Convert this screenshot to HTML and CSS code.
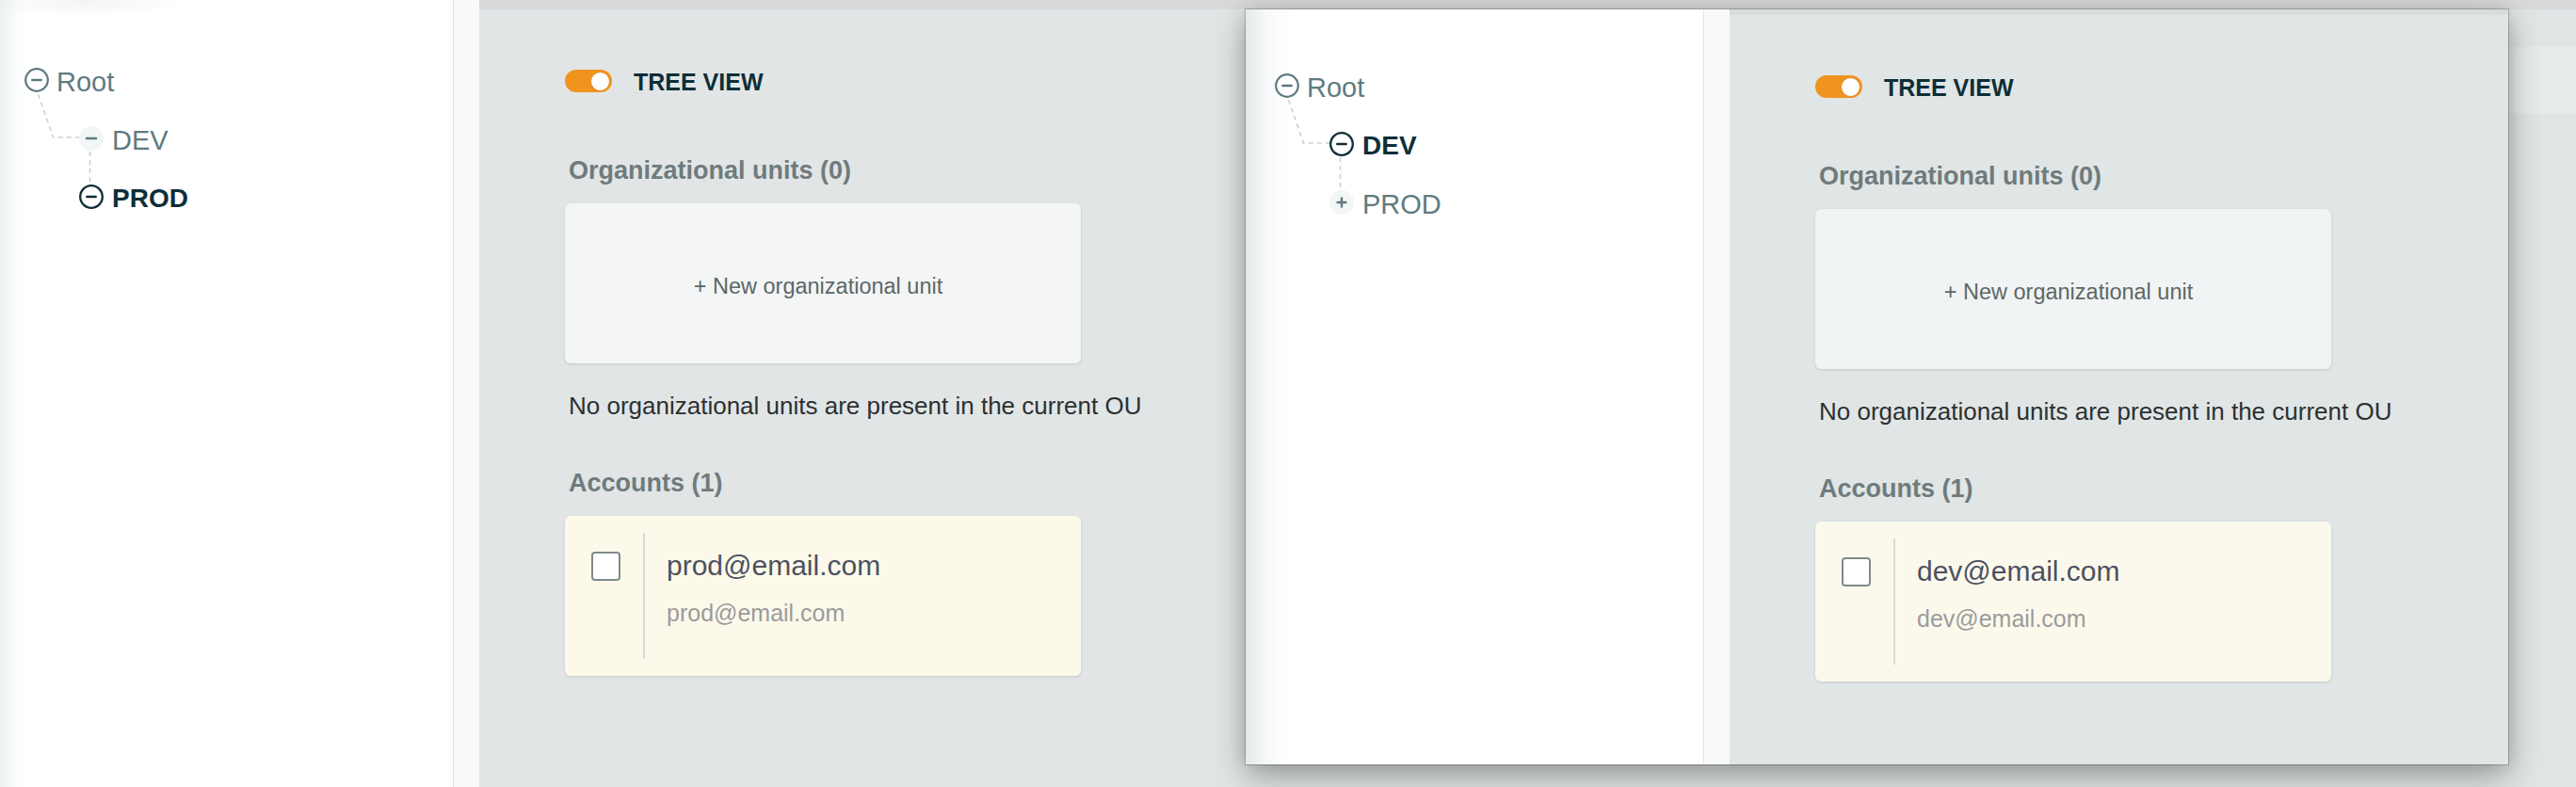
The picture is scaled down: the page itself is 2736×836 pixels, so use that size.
FILE: index.html
```html
<!DOCTYPE html>
<html lang="en">
<head>
<meta charset="utf-8">
<title>Organizational units</title>
<link rel="stylesheet" href="styles.css">
</head>
<body>
<div class="page">
  <aside class="side">
    <div class="tree">
      <svg class="tree-lines" width="130" height="230" viewBox="0 0 130 230">
        <path d="M40.5 100 L56.5 146 L84 146" fill="none" stroke="#c8d2d4" stroke-width="1.6" stroke-dasharray="5 4"/>
        <path d="M95.5 161 L95.5 197" fill="none" stroke="#c8d2d4" stroke-width="1.6" stroke-dasharray="5 4"/>
      </svg>
      <div class="node">
        <svg class="ico" width="26" height="26" viewBox="0 0 26 26"><circle cx="13" cy="13" r="11.8" fill="#fff" stroke="#5e7b80" stroke-width="2.2"/><line x1="8.3" y1="13" x2="17.7" y2="13" stroke="#5e7b80" stroke-width="2.4" stroke-linecap="round"/></svg>
        <span class="label">Root</span>
      </div>
      <div class="node child">
        <svg class="ico" width="26" height="26" viewBox="0 0 26 26"><circle cx="13" cy="13" r="13" fill="#f3f6f7"/><line x1="8" y1="13" x2="18" y2="13" stroke="#5e7b80" stroke-width="2.6" stroke-linecap="round"/></svg>
        <span class="label">DEV</span>
      </div>
      <div class="node child sel">
        <svg class="ico" width="26" height="26" viewBox="0 0 26 26"><circle cx="13" cy="13" r="11.8" fill="#fff" stroke="#0e2e37" stroke-width="2.3"/><line x1="8.3" y1="13" x2="17.7" y2="13" stroke="#0e2e37" stroke-width="2.5" stroke-linecap="round"/></svg>
        <span class="label">PROD</span>
      </div>
    </div>
  </aside>
  <div class="strip"></div>
  <main class="main">
    <div class="topbar"></div>
    <div class="main-body">
      <section class="content">
        <div class="toggle-row">
          <span class="toggle"><span class="knob"></span></span>
          <span class="toggle-label">TREE VIEW</span>
        </div>
        <h2 class="section-title">Organizational units (0)</h2>
        <div class="card new-card">+ New organizational unit</div>
        <p class="note">No organizational units are present in the current OU</p>
        <h2 class="section-title second">Accounts (1)</h2>
        <div class="card account">
          <span class="check"></span>
          <div class="account-text">
            <div class="acc-main">prod@email.com</div>
            <div class="acc-sub">prod@email.com</div>
          </div>
        </div>
      </section>
      <div class="details"><div class="details-band"></div></div>
    </div>
  </main>
</div>

<div class="window">
  <div class="page ghost">
    <aside class="side">
      <div class="tree">
        <svg class="tree-lines" width="130" height="230" viewBox="0 0 130 230">
          <path d="M40.5 100 L56.5 146 L84 146" fill="none" stroke="#c8d2d4" stroke-width="1.6" stroke-dasharray="5 4"/>
          <path d="M95.5 161 L95.5 199" fill="none" stroke="#c8d2d4" stroke-width="1.6" stroke-dasharray="5 4"/>
        </svg>
        <div class="node">
          <svg class="ico" width="26" height="26" viewBox="0 0 26 26"><circle cx="13" cy="13" r="11.8" fill="#fff" stroke="#5e7b80" stroke-width="2.2"/><line x1="8.3" y1="13" x2="17.7" y2="13" stroke="#5e7b80" stroke-width="2.4" stroke-linecap="round"/></svg>
          <span class="label">Root</span>
        </div>
        <div class="node child sel">
          <svg class="ico" width="26" height="26" viewBox="0 0 26 26"><circle cx="13" cy="13" r="11.8" fill="#fff" stroke="#0e2e37" stroke-width="2.3"/><line x1="8.3" y1="13" x2="17.7" y2="13" stroke="#0e2e37" stroke-width="2.5" stroke-linecap="round"/></svg>
          <span class="label">DEV</span>
        </div>
        <div class="node child">
          <svg class="ico" width="26" height="26" viewBox="0 0 26 26"><circle cx="13" cy="13" r="13" fill="#f3f6f7"/><line x1="8.5" y1="13" x2="17.5" y2="13" stroke="#5e7b80" stroke-width="2.4" stroke-linecap="round"/><line x1="13" y1="8.5" x2="13" y2="17.5" stroke="#5e7b80" stroke-width="2.4" stroke-linecap="round"/></svg>
          <span class="label">PROD</span>
        </div>
      </div>
    </aside>
    <div class="strip"></div>
    <main class="main">
      <div class="topbar"></div>
      <div class="main-body">
        <section class="content">
          <div class="toggle-row">
            <span class="toggle"><span class="knob"></span></span>
            <span class="toggle-label">TREE VIEW</span>
          </div>
          <h2 class="section-title">Organizational units (0)</h2>
          <div class="card new-card">+ New organizational unit</div>
          <p class="note">No organizational units are present in the current OU</p>
          <h2 class="section-title second">Accounts (1)</h2>
          <div class="card account">
            <span class="check"></span>
            <div class="account-text">
              <div class="acc-main">dev@email.com</div>
              <div class="acc-sub">dev@email.com</div>
            </div>
          </div>
        </section>
      </div>
    </main>
  </div>
</div>
</body>
</html>
```

FILE: styles.css
```css
* { box-sizing: border-box; margin: 0; padding: 0; }
html, body { width: 2736px; height: 836px; overflow: hidden; }
body {
  font-family: "Liberation Sans", Arial, sans-serif;
  background: #e1e5e6;
  position: relative;
}

.page { display: flex; width: 2736px; height: 836px; }

.side {
  flex: none;
  width: 482px;
  border-right: 1px solid #e2e5e6;
  background:
    radial-gradient(ellipse 110px 16px at 90px 2px, rgba(0,0,0,0.045), rgba(0,0,0,0) 100%),
    linear-gradient(to right, #eef1f2 0, #fbfcfc 18px, #fff 30px);
}
.strip { flex: none; width: 27px; background: #f8f9fa; }

.main { flex: 1; display: flex; flex-direction: column; background: #e1e5e6; }
.topbar { flex: none; height: 10px; background: #d8d9db; }
.main-body { flex: 1; display: flex; }
.content { flex: 1; padding: 64px 0 0 91px; }
.details { flex: none; width: 600px; padding-top: 40px; }
.details-band { height: 70px; background: #e8ebeb; }

/* tree */
.tree { position: relative; padding: 54px 0 0 26px; }
.tree-lines { position: absolute; left: 0; top: 0; }
.node { position: relative; display: flex; align-items: center; height: 62px; gap: 8px; }
.node.child { margin-left: 58px; gap: 9px; }
.ico { flex: none; display: block; }
.label { font-size: 29px; color: #5e7b80; line-height: 32px; padding-top: 3px; }
.node.sel .label { font-weight: 700; color: #0e2e37; font-size: 28px; }

/* toggle */
.toggle-row { display: flex; align-items: center; height: 24px; gap: 23px; }
.toggle {
  display: flex; justify-content: flex-end; align-items: center;
  width: 50px; height: 24px; padding: 0 2px;
  border-radius: 12px; background: #f0941e;
}
.knob { width: 21px; height: 21px; border-radius: 50%; background: #fff; border: 1px solid #e0871a; }
.toggle-label { font-size: 25px; font-weight: 700; color: #0e2e37; line-height: 24px; padding-top: 2px; }

.section-title {
  margin-top: 68px; padding-left: 4px;
  font-size: 27px; font-weight: 700; color: #6f7b7c; line-height: 30px;
}
.section-title.second { margin-top: 52px; }

.card {
  width: 548px; height: 170px; margin-top: 20px;
  border-radius: 6px;
  box-shadow: 0 1px 3px rgba(0,0,0,0.13);
}
.new-card {
  display: flex; align-items: center; justify-content: center;
  padding: 6px 10px 0 0;
  background: #f4f5f6;
  font-size: 23.5px; color: #5a6868;
}
.note {
  margin-top: 30px; padding-left: 4px;
  font-size: 26px; line-height: 30px; color: #2c3031;
}

.account {
  display: flex; align-items: flex-start;
  padding: 18px 0 18px 28px;
  background: #fcf9ea;
}
.check {
  flex: none; width: 31px; height: 31px; margin: 20px 24px 0 0;
  border: 2px solid #7f8a8c; border-radius: 4px; background: #fff;
}
.account-text {
  height: 134px; padding-left: 23px;
  border-left: 2px solid #dcdbd5;
}
.acc-main { margin-top: 17px; font-size: 30px; line-height: 36px; color: #4b5160; }
.acc-sub { margin-top: 17px; font-size: 25px; line-height: 30px; color: #9b9b9b; }

/* floating window (drag preview) */
.window {
  position: absolute; left: 1323px; top: 10px;
  width: 1341px; height: 802px; overflow: hidden;
  background: linear-gradient(to right, #e4e9ea 0, #f6f8f9 22px, #fff 46px);
  box-shadow: 0 0 0 1px rgba(0,0,0,0.2), 0 14px 34px rgba(0,0,0,0.30), 0 0 18px rgba(0,0,0,0.12);
}
.ghost { margin: -4px 0 0 5px; }
.ghost .side { background: transparent; }
.ghost .topbar { background: #d9dcdd; }
.ghost .main { background: #e0e5e5; }
.ghost .new-card { background: #f1f4f4; }
.ghost .account { background: #fbf9ec; }
```
